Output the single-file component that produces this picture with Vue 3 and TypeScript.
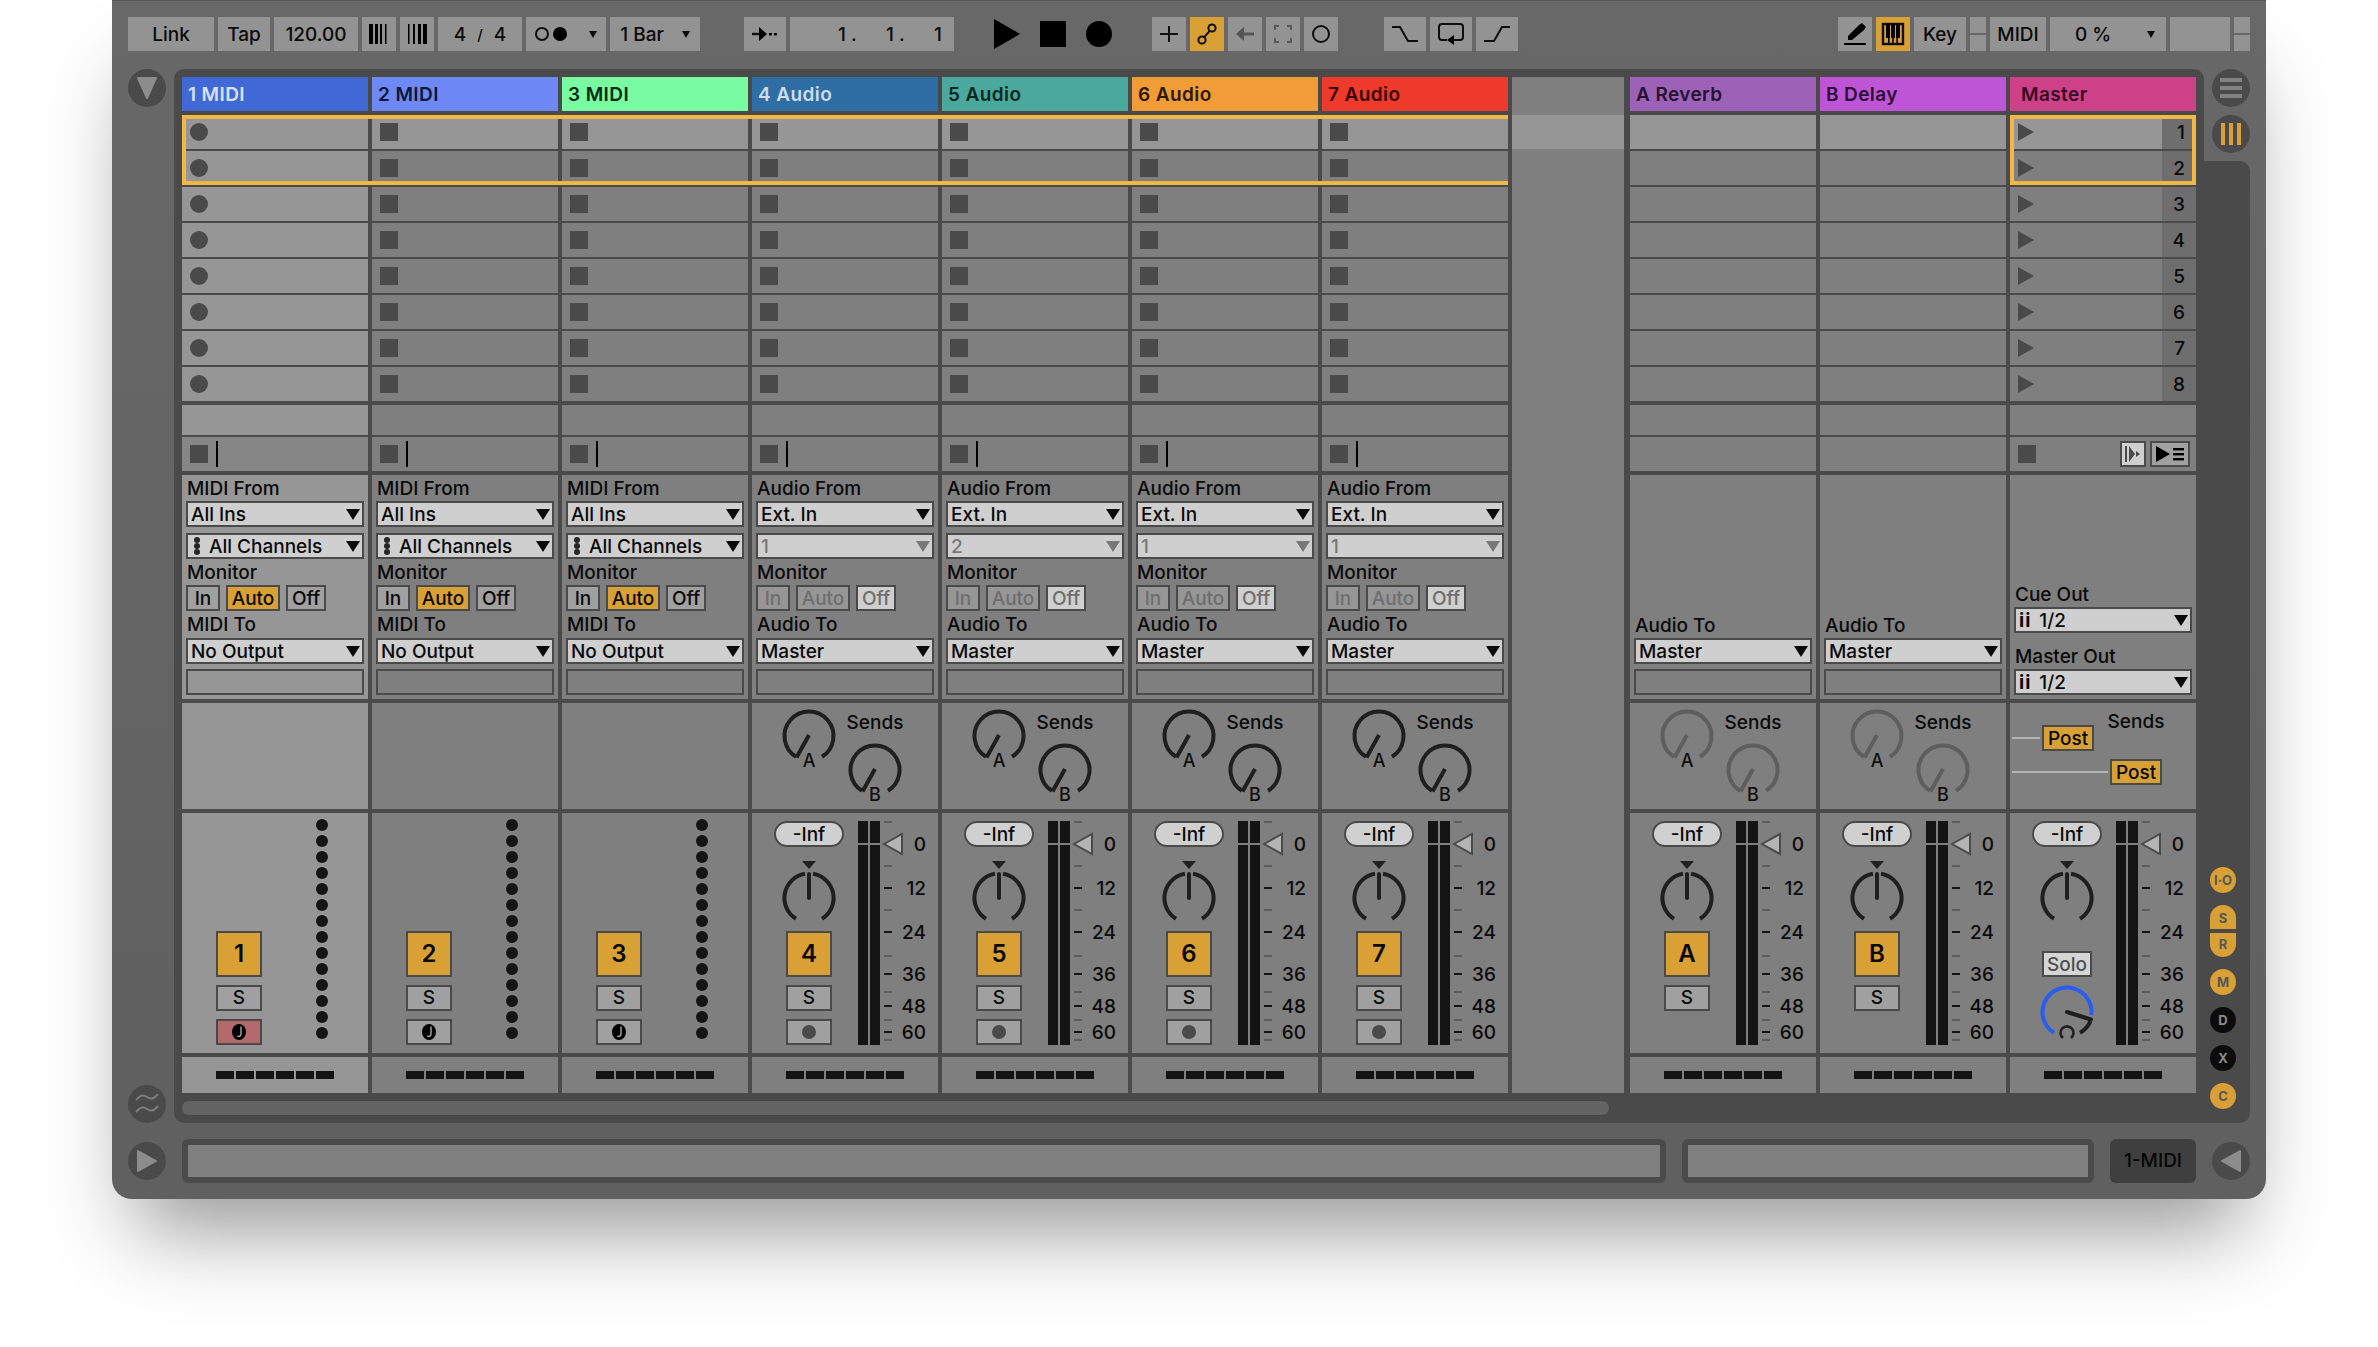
<script setup lang="ts">
type Kind = "midi" | "audio" | "return" | "master"

interface Track {
  key: string
  name: string
  color: string
  ink: string
  kind: Kind
  sub?: string
}

const tracks: Track[] = [
  { key: "1", name: "1 MIDI", color: "#4169d6", ink: "#d8e2f6", kind: "midi" },
  { key: "2", name: "2 MIDI", color: "#6e89f5", ink: "#0e1838", kind: "midi" },
  { key: "3", name: "3 MIDI", color: "#79fca1", ink: "#072a15", kind: "midi" },
  { key: "4", name: "4 Audio", color: "#2e6ea5", ink: "#cfdcea", kind: "audio", sub: "1" },
  { key: "5", name: "5 Audio", color: "#4ba89c", ink: "#0b2723", kind: "audio", sub: "2" },
  { key: "6", name: "6 Audio", color: "#f29c38", ink: "#2b1904", kind: "audio", sub: "1" },
  { key: "7", name: "7 Audio", color: "#ed3a2b", ink: "#380705", kind: "audio", sub: "1" },
  { key: "A", name: "A Reverb", color: "#9c62b8", ink: "#281232", kind: "return" },
  { key: "B", name: "B Delay", color: "#be54d6", ink: "#2c0f35", kind: "return" },
  { key: "M", name: "Master", color: "#cd4189", ink: "#370b23", kind: "master" },
]

const rows = [1, 2, 3, 4, 5, 6, 7, 8]
const dots = Array.from({ length: 14 }, (_, i) => i)
const segs = [0, 1, 2, 3, 4, 5]

const scaleNums = [
  { label: "0", y: 31 },
  { label: "12", y: 75 },
  { label: "24", y: 119 },
  { label: "36", y: 161 },
  { label: "48", y: 193 },
  { label: "60", y: 219 },
]
const darkTicks = [75, 119, 161, 193, 219]
const grayTicks = [9, 53, 97, 143, 179, 207, 227]

const sideBtns = [
  { label: "I·O", cls: "on round" },
  { label: "S", cls: "on half-top" },
  { label: "R", cls: "on half-bottom" },
  { label: "M", cls: "on round" },
  { label: "D", cls: "off round" },
  { label: "X", cls: "off round" },
  { label: "C", cls: "on round" },
]

function isMidi(t: Track) {
  return t.kind === "midi"
}
function hasInput(t: Track) {
  return t.kind === "midi" || t.kind === "audio"
}
</script>

<template>
  <div class="page">
    <div class="window">
      <header class="toolbar">
        <div class="tb w86">Link</div>
        <div class="tb w52">Tap</div>
        <div class="tb w84">120.00</div>
        <div class="tb w34">
          <svg width="24" height="24" viewBox="0 0 24 24">
            <rect x="2" y="2" width="4" height="20" /><rect x="8" y="2" width="3" height="20" /><rect x="13" y="2" width="2" height="20" /><rect x="18" y="2" width="1.5" height="20" />
          </svg>
        </div>
        <div class="tb w34">
          <svg width="24" height="24" viewBox="0 0 24 24">
            <rect x="3" y="2" width="1.5" height="20" /><rect x="8" y="2" width="2" height="20" /><rect x="13" y="2" width="3" height="20" /><rect x="18" y="2" width="4" height="20" />
          </svg>
        </div>
        <div class="tb w84 sig"><span>4</span><span class="slash">/</span><span>4</span></div>
        <div class="tb w80 drop">
          <svg width="36" height="20" viewBox="0 0 36 20">
            <circle cx="7" cy="10" r="6" fill="none" stroke="#0f0f0f" stroke-width="2" /><circle cx="25" cy="10" r="7" />
          </svg>
          <i class="caret small"></i>
        </div>
        <div class="tb w90 drop">1 Bar <i class="caret small"></i></div>

        <div class="tb w42 gap44">
          <svg width="30" height="20" viewBox="0 0 30 20">
            <path d="M2 10h8" stroke="#0f0f0f" stroke-width="2.4" /><polygon points="9,3 17,10 9,17" /><rect x="19" y="9" width="3" height="2.4" /><rect x="24" y="9" width="3" height="2.4" />
          </svg>
        </div>
        <div class="tb pos">
          <span class="pos-cell">1 .</span><span class="pos-cell">1 .</span><span>1</span>
        </div>

        <svg class="transport first" width="26" height="30" viewBox="0 0 26 30"><polygon points="0,0 26,15 0,30" /></svg>
        <svg class="transport" width="26" height="26" viewBox="0 0 26 26"><rect width="26" height="26" /></svg>
        <svg class="transport" width="26" height="26" viewBox="0 0 26 26"><circle cx="13" cy="13" r="13" /></svg>

        <div class="tb w34 gap40">
          <svg width="20" height="20" viewBox="0 0 20 20"><path d="M10 2v16M1 10h18" stroke="#0f0f0f" stroke-width="2" /></svg>
        </div>
        <div class="tb w34 active">
          <svg width="24" height="24" viewBox="0 0 24 24" fill="none" stroke="#0f0f0f" stroke-width="2">
            <circle cx="7" cy="18" r="3.6" /><circle cx="17" cy="6" r="3.6" /><path d="M9 15.4 15 8.6" />
          </svg>
        </div>
        <div class="tb w34">
          <svg width="22" height="20" viewBox="0 0 22 20"><path d="M20 10H8" stroke="#555" stroke-width="3" /><polygon points="2,10 10,3 10,17" fill="#555" /></svg>
        </div>
        <div class="tb w34">
          <svg width="20" height="20" viewBox="0 0 20 20" fill="none" stroke="#5a5a5a" stroke-width="2">
            <path d="M2 6V2h4M14 2h4v4M18 14v4h-4M6 18H2v-4" />
          </svg>
        </div>
        <div class="tb w34">
          <svg width="20" height="20" viewBox="0 0 20 20"><ellipse cx="10" cy="10" rx="8" ry="8" fill="none" stroke="#0f0f0f" stroke-width="2" /></svg>
        </div>

        <div class="tb w42 gap46">
          <svg width="28" height="18" viewBox="0 0 28 18" fill="none" stroke="#0f0f0f" stroke-width="2"><path d="M1 2h8l8 14h10" /></svg>
        </div>
        <div class="tb w42">
          <svg width="28" height="24" viewBox="0 0 28 24">
            <path d="M10 18H5a3 3 0 0 1-3-3V5a3 3 0 0 1 3-3h18a3 3 0 0 1 3 3v10a3 3 0 0 1-3 3h-7" fill="none" stroke="#0f0f0f" stroke-width="2" />
            <polygon points="10,18 17,13 17,23" />
          </svg>
        </div>
        <div class="tb w42">
          <svg width="28" height="18" viewBox="0 0 28 18" fill="none" stroke="#0f0f0f" stroke-width="2"><path d="M1 16h10l8-14h8" /></svg>
        </div>

        <div class="tb w34 push">
          <svg width="24" height="24" viewBox="0 0 24 24">
            <polygon points="5,18 5,14 16,3 19,1 23,5 21,8 9,18" /><rect x="1" y="21" width="22" height="2" />
          </svg>
        </div>
        <div class="tb w34 active">
          <svg width="24" height="24" viewBox="0 0 24 24">
            <rect x="2" y="2" width="20" height="20" fill="none" stroke="#0f0f0f" stroke-width="2.4" />
            <rect x="5" y="2" width="4" height="14" /><rect x="10" y="2" width="4" height="14" /><rect x="15" y="2" width="4" height="14" />
            <rect x="7" y="16" width="1.6" height="5" /><rect x="11.2" y="16" width="1.6" height="5" /><rect x="15.4" y="16" width="1.6" height="5" />
          </svg>
        </div>
        <div class="tb w52">Key</div>
        <div class="split w16"><span></span><span></span></div>
        <div class="tb w56">MIDI</div>
        <div class="tb w116 drop pct">0 % <i class="caret small"></i></div>
        <div class="tb w60"></div>
        <div class="split w16"><span></span><span></span></div>
      </header>

      <div class="middle">
        <div class="rail">
          <div class="disc">
            <svg width="22" height="24" viewBox="0 0 22 24"><path d="M2 2h18L11 22z" fill="#8c8c8c" stroke="#8c8c8c" stroke-width="2" stroke-linejoin="round" /></svg>
          </div>
          <div class="disc">
            <svg width="26" height="24" viewBox="0 0 26 24" fill="none" stroke="#7d7d7d" stroke-width="2">
              <path d="M2 8c5-6 8-5 11-3s6 3 11-3" /><path d="M2 20c5-6 8-5 11-3s6 3 11-3" />
            </svg>
          </div>
        </div>

        <section class="session">
          <div class="tracks">
            <template v-for="t in tracks" :key="t.key">
              <div v-if="t.key === 'A'" class="gap-col"><div class="gap-top"></div><div class="gap-row"></div></div>
              <div class="track" :class="{ selected: t.key === '1' }">
                <div class="name" :class="{ 'name-master': t.kind === 'master' }" :style="{ background: t.color, color: t.ink }">{{ t.name }}</div>

                <div class="clips">
                  <div v-for="r in rows" :key="r" class="clip" :class="{ lit: r === 1 }">
                    <i v-if="isMidi(t) && t.key === '1'" class="rec"></i>
                    <i v-else-if="hasInput(t)" class="stop"></i>
                    <template v-else-if="t.kind === 'master'">
                      <svg class="scene-play" width="16" height="18" viewBox="0 0 16 18"><polygon points="0,0 16,9 0,18" /></svg>
                      <span class="scene-num">{{ r }}</span>
                    </template>
                  </div>
                </div>

                <div class="clip blank"></div>

                <div class="clip stoprow">
                  <template v-if="hasInput(t)">
                    <i class="stop"></i><i class="bar"></i>
                  </template>
                  <template v-else-if="t.kind === 'master'">
                    <i class="stop"></i>
                    <span class="mini light">
                      <svg width="20" height="20" viewBox="0 0 20 20" fill="#4a4a4a"><rect x="2" y="2" width="2" height="16" /><polygon points="6,2 12,10 6,18" /><polygon points="13,7 17,10 13,13" /></svg>
                    </span>
                    <span class="mini wide">
                      <svg width="30" height="18" viewBox="0 0 30 18"><polygon points="1,1 15,9 1,17" /><rect x="18" y="3" width="11" height="2.4" /><rect x="18" y="8" width="11" height="2.4" /><rect x="18" y="13" width="11" height="2.4" /></svg>
                    </span>
                  </template>
                </div>

                <!-- routing -->
                <div class="device" :class="{ bottomed: !hasInput(t) }">
                  <template v-if="hasInput(t)">
                    <div class="lbl">{{ isMidi(t) ? "MIDI From" : "Audio From" }}</div>
                    <div class="sel"><span>{{ isMidi(t) ? "All Ins" : "Ext. In" }}</span><i class="caret"></i></div>
                    <div class="sel mt6" :class="{ dis: !isMidi(t) }">
                      <span v-if="isMidi(t)" class="chan"><i></i><i></i><i></i></span>
                      <span>{{ isMidi(t) ? "All Channels" : t.sub }}</span><i class="caret"></i>
                    </div>
                    <div class="lbl">Monitor</div>
                    <div class="mon" :class="{ muted: !isMidi(t) }">
                      <span class="m-in">In</span>
                      <span class="m-auto" :class="{ active: isMidi(t) }">Auto</span>
                      <span class="m-off">Off</span>
                    </div>
                    <div class="lbl lbl-to">{{ isMidi(t) ? "MIDI To" : "Audio To" }}</div>
                    <div class="sel"><span>{{ isMidi(t) ? "No Output" : "Master" }}</span><i class="caret"></i></div>
                    <div class="sel empty"></div>
                  </template>
                  <template v-else-if="t.kind === 'return'">
                    <div class="lbl">Audio To</div>
                    <div class="sel"><span>Master</span><i class="caret"></i></div>
                    <div class="sel empty"></div>
                  </template>
                  <template v-else>
                    <div class="lbl">Cue Out</div>
                    <div class="sel"><span class="ii">ii</span><span>1/2</span><i class="caret"></i></div>
                    <div class="lbl lbl-master">Master Out</div>
                    <div class="sel"><span class="ii">ii</span><span>1/2</span><i class="caret"></i></div>
                  </template>
                </div>

                <!-- sends -->
                <div class="sends">
                  <template v-if="t.kind === 'audio' || t.kind === 'return'">
                    <svg class="knob" :class="{ faded: t.kind === 'return' }" width="64" height="66" viewBox="-32 -28 64 66">
                      <path class="k-line" d="M-13 20.8A24.5 24.5 0 1 1 13 20.8" /><path class="k-line" d="M-12.5 21.5 0-1" />
                      <text class="k-txt" x="0" y="31" text-anchor="middle">A</text>
                    </svg>
                    <div class="sends-right">
                      <div class="sends-lbl">Sends</div>
                      <svg class="knob" :class="{ faded: t.kind === 'return' }" width="64" height="66" viewBox="-32 -28 64 66">
                        <path class="k-line" d="M-13 20.8A24.5 24.5 0 1 1 13 20.8" /><path class="k-line" d="M-12.5 21.5 0-1" />
                        <text class="k-txt" x="0" y="31" text-anchor="middle">B</text>
                      </svg>
                    </div>
                  </template>
                  <div v-else-if="t.kind === 'master'" class="posts">
                    <div class="post-row"><i class="wire w28"></i><span class="post">Post</span><span class="sends-lbl post-lbl">Sends</span></div>
                    <div class="post-row"><i class="wire w96"></i><span class="post">Post</span></div>
                  </div>
                </div>

                <!-- mixer strip -->
                <div class="mixer">
                  <div class="strip">
                    <template v-if="!isMidi(t)">
                      <div class="pill">-Inf</div>
                      <svg class="pan" width="64" height="70" viewBox="-32 -39 64 70">
                        <polygon points="-7,-37 7,-37 0,-29" fill="#222" />
                        <path class="k-line" d="M-13 20.8A24.5 24.5 0 0 1-4-24.2" /><path class="k-line" d="M13 20.8A24.5 24.5 0 0 0 4-24.2" />
                        <path class="k-line round" d="M0-24V0" />
                      </svg>
                    </template>
                    <div v-else class="strip-spacer"></div>

                    <template v-if="t.kind !== 'master'">
                      <div class="trk">{{ t.key }}</div>
                      <div class="s-btn">S</div>
                      <div v-if="t.kind === 'audio'" class="s-btn arm"><i class="arm-dot"></i></div>
                      <div v-else-if="isMidi(t)" class="s-btn arm" :class="{ armed: t.key === '1' }">
                        <svg width="16" height="18" viewBox="0 0 16 18"><ellipse cx="8" cy="9" rx="7" ry="8" /><path d="M10 3.500v7.500c0 2-2 3-4 2" fill="none" stroke="#b4b4b4" stroke-width="1.300" /></svg>
                      </div>
                    </template>
                    <template v-else>
                      <div class="solo">Solo</div>
                      <svg class="cue" width="64" height="62" viewBox="-32 -28 64 62">
                        <path d="M-13 20.8A24.5 24.5 0 1 1 24.300 3" fill="none" stroke="#2b5cf2" stroke-width="4" />
                        <path class="k-line" d="M23.500 9A24.500 24.500 0 0 1 13 20.800" />
                        <path class="k-line round" d="M0 0 24 7.500" />
                        <path d="M-4 26A6.500 6.500 0 1 1 4 26" fill="none" stroke="#222" stroke-width="2.600" />
                      </svg>
                    </template>
                  </div>

                  <div v-if="isMidi(t)" class="dots"><i v-for="d in dots" :key="d"></i></div>
                  <svg v-else class="scale" width="80" height="240" viewBox="0 0 80 240">
                    <rect x="0" y="8" width="10" height="22" fill="#141414" /><rect x="12" y="8" width="10" height="22" fill="#141414" />
                    <rect x="0" y="32" width="10" height="200" fill="#141414" /><rect x="12" y="32" width="10" height="200" fill="#141414" />
                    <rect v-for="y in grayTicks" :key="'g' + y" x="26" :y="y - 1" width="8" height="2" fill="#5c5c5c" />
                    <rect v-for="y in darkTicks" :key="'d' + y" x="26" :y="y - 1" width="8" height="2" fill="#141414" />
                    <polygon points="26,31 44,21 44,41" fill="#b4b4b4" stroke="#4a4a4a" stroke-width="2" />
                    <text v-for="n in scaleNums" :key="n.label" class="scale-num" x="68" :y="n.y + 7" text-anchor="end">{{ n.label }}</text>
                  </svg>
                </div>

                <div class="status"><i v-for="s in segs" :key="s"></i></div>
              </div>
            </template>

            <div class="select-box main"></div>
            <div class="select-box scene"></div>
          </div>

          <div class="scroller"></div>
        </section>

        <aside class="side">
          <div class="side-top">
            <div class="disc">
              <svg width="22" height="20" viewBox="0 0 22 20" fill="#838383"><rect y="0" width="22" height="4" /><rect y="8" width="22" height="4" /><rect y="16" width="22" height="4" /></svg>
            </div>
            <div class="disc">
              <svg width="22" height="22" viewBox="0 0 22 22" fill="#d9a036"><rect x="1" width="4" height="22" /><rect x="9" width="4" height="22" /><rect x="17" width="4" height="22" /></svg>
            </div>
          </div>
          <div class="side-strip">
            <span v-for="b in sideBtns" :key="b.label" class="side-btn" :class="b.cls">{{ b.label }}</span>
          </div>
        </aside>
      </div>

      <footer class="foot">
        <div class="disc low">
          <svg width="24" height="26" viewBox="0 0 24 26"><path d="M3 3v20l18-10z" fill="#8c8c8c" stroke="#8c8c8c" stroke-width="2" stroke-linejoin="round" /></svg>
        </div>
        <div class="detail wide"></div>
        <div class="detail narrow"></div>
        <div class="selected-name">1-MIDI</div>
        <div class="disc low">
          <svg width="24" height="26" viewBox="0 0 24 26"><path d="M21 3v20L3 13z" fill="#8c8c8c" stroke="#8c8c8c" stroke-width="2" stroke-linejoin="round" /></svg>
        </div>
      </footer>
    </div>
  </div>
</template>

<style scoped>
.page {
  width: 2378px;
  height: 1347px;
  background: #fff;
  overflow: hidden;
  font-family: Inter, "Liberation Sans", sans-serif;
  font-size: 19px;
  font-weight: 500;
  color: #0a0a0a;
}
.window {
  margin-left: 112px;
  width: 2154px;
  height: 1199px;
  box-sizing: border-box;
  padding: 0 16px;
  border-radius: 0 0 20px 20px;
  background: linear-gradient(#686868, #606060);
  box-shadow: 0 54px 80px -24px rgba(0, 0, 0, 0.42), inset 0 1px 0 #555;
  display: flex;
  flex-direction: column;
}

/* top bar */
.toolbar {
  display: flex;
  align-items: center;
  gap: 4px;
  height: 34px;
  margin: 17px 0 18px;
}
.tb {
  height: 34px;
  background: #939393;
  display: flex;
  align-items: center;
  justify-content: center;
  flex: none;
  white-space: nowrap;
}
.tb svg, .transport { display: block; }
.tb.active { background: #d9a036; }
.sig { gap: 11px; }
.slash { font-size: 15px; }
.w16 { width: 16px; }
.w34 { width: 34px; }
.w42 { width: 42px; }
.w52 { width: 52px; }
.w56 { width: 56px; }
.w60 { width: 60px; }
.w80 { width: 80px; }
.w84 { width: 84px; }
.w86 { width: 86px; }
.w90 { width: 90px; }
.w116 { width: 116px; }
.gap44 { margin-left: 40px; }
.gap40 { margin-left: 36px; }
.gap46 { margin-left: 42px; }
.push { margin-left: auto; }
.drop { gap: 18px; }
.pct { gap: 36px; padding-left: 14px; box-sizing: border-box; }
.pos {
  width: 164px;
  box-sizing: border-box;
  justify-content: flex-start;
  padding-left: 48px;
}
.pos-cell { width: 48px; flex: none; }
.transport { flex: none; margin-left: 16px; }
.transport.first { margin-left: 36px; }
.split {
  height: 34px;
  flex: none;
  display: flex;
  flex-direction: column;
  gap: 2px;
}
.split span { display: block; background: #939393; flex: 1; }
.split span:first-child { flex: 0 0 16px; }
.caret {
  display: block;
  flex: none;
  width: 0;
  height: 0;
  border-left: 7px solid transparent;
  border-right: 7px solid transparent;
  border-top: 11px solid #0a0a0a;
}
.caret.small {
  border-left-width: 4.500px;
  border-right-width: 4.500px;
  border-top-width: 7px;
}

.middle {
  display: flex;
  height: 1054px;
  flex: none;
}
.rail {
  width: 38px;
  margin-right: 8px;
  flex: none;
  display: flex;
  flex-direction: column;
  justify-content: space-between;
}
.disc {
  width: 38px;
  height: 38px;
  border-radius: 50%;
  background: #4a4a4a;
  display: flex;
  align-items: center;
  justify-content: center;
  flex: none;
}

/* session panel */
.session {
  width: 2030px;
  flex: none;
  box-sizing: border-box;
  padding: 8px;
  background: #4a4a4a;
  border-radius: 10px 10px 0 10px;
}
.tracks {
  position: relative;
  display: flex;
  gap: 4px;
  height: 1016px;
}
.track {
  width: 186px;
  flex: none;
  display: flex;
  flex-direction: column;
  --cell: #7f7f7f;
}
.track.selected { --cell: #969696; }
.gap-col {
  width: 112px;
  margin-right: 2px;
  flex: none;
  background: #7f7f7f;
}
.gap-top { height: 38px; }
.gap-row { height: 34px; background: #969696; }
.name {
  height: 34px;
  line-height: 36px;
  padding-left: 6px;
  font-weight: 600;
  letter-spacing: 0.4px;
  flex: none;
}
.name-master { padding-left: 11px; }
.clips {
  margin-top: 4px;
  display: flex;
  flex-direction: column;
  gap: 2px;
}
.clip {
  height: 34px;
  background: var(--cell);
  display: flex;
  align-items: center;
  padding-left: 8px;
  box-sizing: border-box;
  position: relative;
  flex: none;
}
.clip.lit { background: #969696; }
.blank { height: 30px; margin-top: 4px; }
.stoprow { margin-top: 2px; background: #7f7f7f; }
.selected .stoprow { background: #868686; }
.rec {
  width: 18px;
  height: 18px;
  border-radius: 50%;
  background: #4a4a4a;
}
.stop {
  width: 18px;
  height: 18px;
  background: #4a4a4a;
  display: block;
  flex: none;
}
.bar {
  display: block;
  width: 2px;
  height: 26px;
  margin-left: 8px;
  background: #000;
}
.scene-play { fill: #4a4a4a; display: block; }
.scene-num {
  margin-left: auto;
  width: 34px;
  height: 34px;
  line-height: 35px;
  box-sizing: border-box;
  padding-right: 11px;
  text-align: right;
  background: #6e6e6e;
}
.mini {
  height: 26px;
  width: 26px;
  box-sizing: border-box;
  border: 2px solid #4a4a4a;
  background: #a0a0a0;
  display: flex;
  align-items: center;
  justify-content: center;
  margin-left: 84px;
  flex: none;
}
.mini.light { background: #cfcfcf; }
.mini.wide { width: 40px; margin-left: 4px; }

/* routing section */
.device {
  margin-top: 4px;
  height: 224px;
  flex: none;
  box-sizing: border-box;
  padding: 0 4px 4px;
  background: var(--cell);
  display: flex;
  flex-direction: column;
}
.device.bottomed { justify-content: flex-end; }
.lbl {
  height: 26px;
  line-height: 28px;
  padding-left: 1px;
  flex: none;
  white-space: nowrap;
}
.lbl-to { height: 27px; }
.lbl-master { height: 26px; margin-top: 10px; }
.sel {
  height: 26px;
  box-sizing: border-box;
  border: 2px solid #4a4a4a;
  background: #cfcfcf;
  display: flex;
  align-items: center;
  padding: 0 2px 0 3px;
  flex: none;
  white-space: nowrap;
}
.sel .caret { margin-left: auto; }
.sel.dis { color: #787878; }
.sel.dis .caret { border-top-color: #787878; }
.sel.empty { background: transparent; margin-top: 5px; }
.mt6 { margin-top: 6px; }
.chan {
  display: flex;
  flex-direction: column;
  margin: 0 9px 0 3px;
}
.chan i {
  display: block;
  width: 6px;
  height: 6px;
  border-radius: 50%;
  background: #262626;
}
.ii {
  font-weight: 700;
  margin-right: 8px;
  letter-spacing: 1px;
}
.mon {
  display: flex;
  height: 26px;
  flex: none;
}
.mon span {
  box-sizing: border-box;
  height: 26px;
  line-height: 23px;
  text-align: center;
  border: 2px solid #4a4a4a;
  background: #a0a0a0;
  flex: none;
}
.m-in { width: 34px; }
.m-auto { width: 54px; margin-left: 6px; }
.m-off { width: 40px; margin-left: 6px; }
.mon .active { background: #d9a036; }
.mon.muted .m-in, .mon.muted .m-auto { color: #6e6e6e; background: #969696; }
.mon.muted .m-off { color: #6e6e6e; background: #cfcfcf; }

/* sends */
.sends {
  margin-top: 4px;
  height: 106px;
  flex: none;
  box-sizing: border-box;
  padding: 5px 0 0 25px;
  background: var(--cell);
  display: flex;
}
.knob { display: block; flex: none; --k: #1f1f1f; }
.knob.faded { --k: #5e5e5e; }
.k-line {
  fill: none;
  stroke: var(--k, #1f1f1f);
  stroke-width: 4;
}
.k-line.round { stroke-linecap: round; }
.k-txt {
  font-family: Inter, sans-serif;
  font-size: 18px;
  fill: #0f0f0f;
}
.sends-right {
  margin-left: 2px;
  width: 64px;
  position: relative;
  display: flex;
  flex-direction: column;
  align-items: center;
}
.sends-lbl {
  height: 28px;
  line-height: 30px;
  margin-bottom: 6px;
}
.posts {
  margin: 17px 0 0 -23px;
  display: flex;
  flex-direction: column;
  gap: 8px;
}
.post-row {
  display: flex;
  align-items: center;
  height: 26px;
}
.wire {
  display: block;
  height: 2px;
  background: #b4b4b4;
  margin-right: 2px;
}
.w28 { width: 28px; }
.w96 { width: 96px; }
.post {
  width: 52px;
  height: 26px;
  line-height: 23px;
  box-sizing: border-box;
  text-align: center;
  border: 2px solid #4a4a4a;
  background: #d9a036;
  flex: none;
}
.post-lbl {
  width: 84px;
  text-align: center;
  align-self: flex-start;
  margin-top: -18px;
}

/* mixer */
.mixer {
  margin-top: 4px;
  height: 240px;
  flex: none;
  background: var(--cell);
  display: flex;
}
.strip {
  width: 114px;
  margin-right: -8px;
  padding-top: 8px;
  box-sizing: border-box;
  display: flex;
  flex-direction: column;
  align-items: center;
  flex: none;
}
.strip-spacer { height: 110px; flex: none; }
.pill {
  width: 70px;
  height: 26px;
  line-height: 23px;
  box-sizing: border-box;
  border: 2px solid #4a4a4a;
  border-radius: 13px;
  background: #d0d0d0;
  text-align: center;
  flex: none;
}
.pan {
  display: block;
  margin: 12px 0 2px;
  flex: none;
}
.pan polygon { stroke: none; }
.trk {
  width: 46px;
  height: 46px;
  line-height: 42px;
  box-sizing: border-box;
  border: 2px solid #4a4a4a;
  background: #d9a036;
  text-align: center;
  font-size: 24px;
  font-weight: 600;
  flex: none;
}
.s-btn {
  width: 46px;
  height: 26px;
  line-height: 22px;
  margin-top: 8px;
  box-sizing: border-box;
  border: 2px solid #4a4a4a;
  background: #a0a0a0;
  text-align: center;
  flex: none;
  display: flex;
  align-items: center;
  justify-content: center;
}
.arm.armed { background: #b26a6d; }
.arm-dot {
  display: block;
  width: 14px;
  height: 14px;
  border-radius: 50%;
  background: #4a4a4a;
}
.solo {
  width: 50px;
  height: 26px;
  line-height: 23px;
  margin-top: 20px;
  box-sizing: border-box;
  border: 2px solid #4a4a4a;
  background: #d5d5d5;
  color: #4f4f4f;
  text-align: center;
  flex: none;
}
.cue { display: block; margin-top: 7px; flex: none; }
.dots {
  margin: 6px 0 0 28px;
  display: flex;
  flex-direction: column;
  gap: 4px;
}
.dots i {
  display: block;
  width: 12px;
  height: 12px;
  border-radius: 50%;
  background: #141414;
}
.scale { display: block; flex: none; }
.scale-num {
  font-family: Inter, sans-serif;
  font-size: 19px;
  fill: #0a0a0a;
}

.status {
  margin-top: 4px;
  height: 36px;
  flex: none;
  background: var(--cell);
  display: flex;
  align-items: center;
  padding-left: 34px;
  gap: 2px;
}
.status i {
  display: block;
  width: 18px;
  height: 8px;
  background: #141414;
}

.select-box {
  position: absolute;
  top: 38px;
  height: 70px;
  box-sizing: border-box;
  border: 4px solid #f2b843;
  pointer-events: none;
}
.select-box.main { left: 0; width: 1326px; border-right: 0; }
.select-box.scene { left: 1828px; width: 186px; }
.scroller {
  margin-top: 8px;
  width: 1427px;
  height: 14px;
  border-radius: 7px;
  background: #636363;
}

/* right side */
.side {
  width: 46px;
  flex: none;
  display: flex;
  flex-direction: column;
}
.side-top {
  padding-left: 8px;
  display: flex;
  flex-direction: column;
  gap: 8px;
  height: 92px;
  flex: none;
}
.side-strip {
  flex: 1;
  background: #4a4a4a;
  border-radius: 0 10px 10px 0;
  display: flex;
  flex-direction: column;
  align-items: flex-start;
  justify-content: flex-end;
  padding: 0 0 14px 6px;
  gap: 12px;
}
.side-btn {
  width: 26px;
  height: 26px;
  line-height: 26px;
  text-align: center;
  font-size: 13px;
  font-weight: 700;
  flex: none;
}
.side-btn.on { background: #d9a036; color: #575757; }
.side-btn.off { background: #0c0c0c; color: #8a8a8a; }
.side-btn.round { border-radius: 50%; }
.side-btn.half-top { height: 24px; line-height: 26px; border-radius: 13px 13px 0 0; }
.side-btn.half-bottom { height: 24px; line-height: 22px; border-radius: 0 0 13px 13px; margin-top: -8px; }

/* bottom row */
.foot {
  margin-top: 16px;
  height: 44px;
  flex: none;
  display: flex;
  align-items: center;
  gap: 16px;
}
.detail {
  height: 44px;
  box-sizing: border-box;
  border: solid #4a4a4a;
  border-width: 6px;
  border-radius: 6px;
  background: #808080;
  flex: none;
}
.detail.wide { width: 1484px; }
.detail.narrow { width: 412px; }
.selected-name {
  width: 86px;
  height: 44px;
  line-height: 44px;
  border-radius: 6px;
  background: #3f3f3f;
  color: #060606;
  text-align: center;
  flex: none;
}
</style>

<style>
html, body { margin: 0; background: #fff; }
</style>
